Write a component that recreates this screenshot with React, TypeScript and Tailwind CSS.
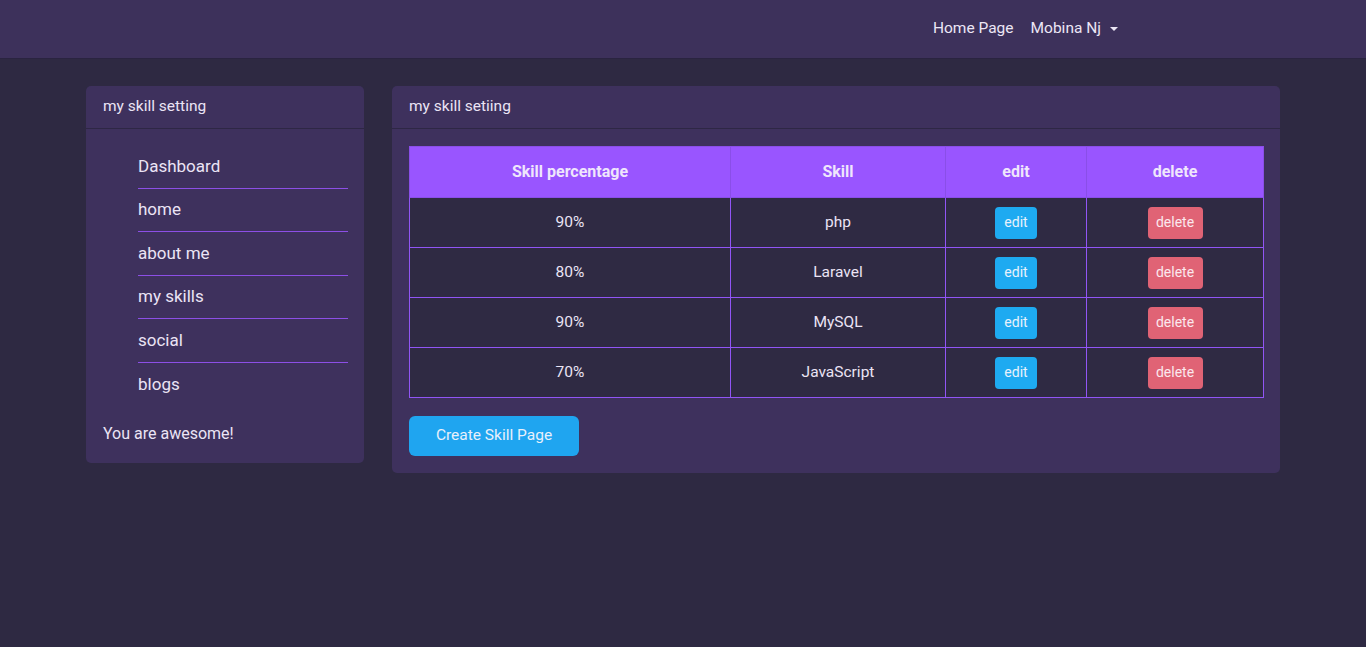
import React from "react";

const rows = [
  { p: "90%", s: "php" },
  { p: "80%", s: "Laravel" },
  { p: "90%", s: "MySQL" },
  { p: "70%", s: "JavaScript" },
];

const nav = ["Dashboard", "home", "about me", "my skills", "social", "blogs"];

export default function App() {
  return (
    <div
      className="min-h-[647px] bg-[#2e2942] text-[#ebe4f5]"
      style={{ fontFamily: "Roboto, 'Liberation Sans', sans-serif" }}
    >
      <header className="h-[59px] bg-[#3d315b] border-b border-[#2a2440] flex items-center justify-end pr-[248px]">
        <div className="flex items-center gap-[17px] text-[15.5px] text-[#ece6f5]">
          <span>Home Page</span>
          <span className="flex items-center gap-[9px]">
            Mobina Nj
            <span className="w-0 h-0 border-l-[4px] border-r-[4px] border-t-[4px] border-l-transparent border-r-transparent border-t-[#ece6f5]" />
          </span>
        </div>
      </header>

      <main className="flex items-start gap-[28px] pl-[86px] pt-[27px]">
        <aside className="w-[278px] bg-[#3e315d] rounded-[5px]">
          <div className="h-[43px] flex items-center px-[17px] border-b border-[#2e2745] text-[15.5px]">
            my skill setting
          </div>
          <ul className="pl-[52px] pr-[16px] pt-[16px]">
            {nav.map((n, i) => (
              <li
                key={n}
                className={`h-[43.5px] flex items-center text-[17px] ${
                  i < nav.length - 1 ? "border-b border-[#8c4fe6]" : ""
                }`}
              >
                {n}
              </li>
            ))}
          </ul>
          <div className="px-[17px] pt-[16px] pb-[17px] text-[16px]">You are awesome!</div>
        </aside>

        <section className="w-[888px] bg-[#3e315d] rounded-[5px]">
          <div className="h-[43px] flex items-center px-[17px] border-b border-[#2e2745] text-[15.5px]">
            my skill setiing
          </div>
          <div className="px-[17px] pt-[17px] pb-[17px]">
            <table className="w-[854px] border-collapse table-fixed text-[16px]">
              <thead>
                <tr className="bg-[#9955ff] h-[51px]">
                  <th className="w-[321px] border border-[#8a4ee8] font-bold text-[#efe6fc]">Skill percentage</th>
                  <th className="w-[215px] border border-[#8a4ee8] font-bold text-[#efe6fc]">Skill</th>
                  <th className="w-[141px] border border-[#8a4ee8] font-bold text-[#efe6fc]">edit</th>
                  <th className="w-[177px] border border-[#8a4ee8] font-bold text-[#efe6fc]">delete</th>
                </tr>
              </thead>
              <tbody>
                {rows.map((r) => (
                  <tr key={r.s} className="bg-[#2f2a43] h-[50px]">
                    <td className="border border-[#9155f5] text-center text-[15.5px]">{r.p}</td>
                    <td className="border border-[#9155f5] text-center text-[15.5px]">{r.s}</td>
                    <td className="border border-[#9155f5] text-center">
                      <span className="inline-flex items-center justify-center w-[42px] h-[32px] rounded-[4px] bg-[#1eaaf1] text-[14px] text-[#e8f2fc]">
                        edit
                      </span>
                    </td>
                    <td className="border border-[#9155f5] text-center">
                      <span className="inline-flex items-center justify-center w-[55px] h-[32px] rounded-[4px] bg-[#e06375] text-[14px] text-[#fbe8ee]">
                        delete
                      </span>
                    </td>
                  </tr>
                ))}
              </tbody>
            </table>
            <button className="mt-[18px] w-[170px] h-[40px] rounded-[6px] bg-[#1fa5f0] text-[15.5px] text-[#e8f0fb]">
              Create Skill Page
            </button>
          </div>
        </section>
      </main>
    </div>
  );
}
